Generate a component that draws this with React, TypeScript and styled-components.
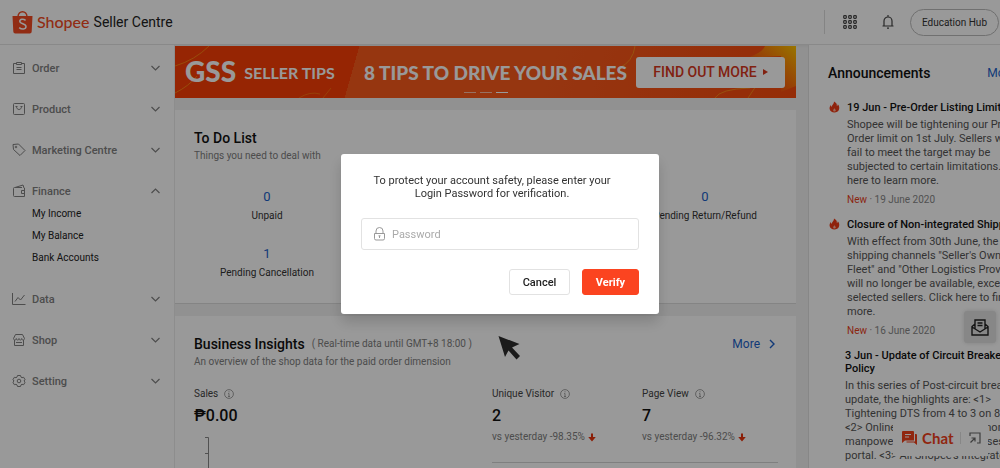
import React from 'react';
import styled, { createGlobalStyle } from 'styled-components';

const Global = createGlobalStyle`
  *, *::before, *::after { box-sizing: border-box; }
  body { margin: 0; background: #f2f2f2; font-family: Roboto, "Liberation Sans", sans-serif; color: #222; overflow: hidden; }
  h1, h2, h3, p, ul, dl, dd { margin: 0; padding: 0; }
  ul { list-style: none; }
  button, input { font: inherit; }
  button { padding: 0; border: 0; background: none; color: inherit; cursor: pointer; }
  a { color: inherit; text-decoration: none; }
  svg { display: block; flex: none; }
`;

const Page = styled.div`
  display: flex;
  flex-direction: column;
  height: 100vh;
  overflow: hidden;
`;

const Header = styled.header`
  display: flex;
  align-items: center;
  flex: none;
  height: 45px;
  padding: 0 1px 0 12px;
  background: #fff;
  border-bottom: 1px solid #e4e4e4;
  box-shadow: 0 1px 3px rgba(0, 0, 0, 0.06);
`;

const Brand = styled.a`
  display: flex;
  align-items: center;
  gap: 4px;
  flex: 1;
  font-size: 14px;
  white-space: nowrap;
`;

const BrandName = styled.span`
  font: 500 16px/24px Lato, "Liberation Sans", sans-serif;
  color: #f24a22;
`;

const Tools = styled.div`
  display: flex;
  align-items: center;
  height: 24px;
  padding-left: 18px;
  border-left: 1px solid #ddd;
`;

const IconButton = styled.button<{ $gap: number }>`
  margin-right: ${p => p.$gap}px;
  color: #444;
`;

const HubButton = styled.button`
  height: 27px;
  padding: 0 11px;
  border: 1px solid #bbb;
  border-radius: 14px;
  font-size: 10px;
  color: #333;
  white-space: nowrap;
`;

const Columns = styled.div`
  display: grid;
  grid-template-columns: 175px minmax(0, 1fr) 192px;
  flex: 1;
  min-height: 0;
`;

const Sidebar = styled.nav`
  display: flex;
  flex-direction: column;
  gap: 19px;
  padding: 12px 14px 0 12px;
  background: #fff;
  border-right: 1px solid #ececec;
`;

const GroupHead = styled.button`
  display: flex;
  align-items: center;
  gap: 6px;
  width: 100%;
  height: 22px;
  font-size: 11px;
  font-weight: 500;
  color: #808080;
  text-align: left;
  span { flex: 1; }
`;

const SubList = styled.ul`
  padding: 1px 0 0 20px;
  font-size: 10px;
  line-height: 22px;
  color: #222;
`;

const Main = styled.main`
  display: flex;
  flex-direction: column;
  gap: 12px;
  padding: 1px 12px 0 0;
`;

const Banner = styled.section`
  position: relative;
  display: flex;
  align-items: center;
  flex: none;
  height: 52px;
  padding: 0 11px 0 10px;
  overflow: hidden;
  background: linear-gradient(106deg, #fa3e06 0 29%, #fb5a1c 29% 60%, #f84a0c);
  font-family: Lato, "Liberation Sans", sans-serif;
  color: #fff;
  white-space: nowrap;
`;

const Swirls = styled.svg`
  position: absolute;
  inset: 0;
  width: 100%;
  height: 100%;
`;

const BannerLogo = styled.span`
  position: relative;
  margin-right: 8px;
  padding-bottom: 3px;
  font-size: 28px;
  font-weight: 900;
`;

const BannerTips = styled.span`
  position: relative;
  flex: 1;
  font-size: 16px;
  font-weight: 700;
`;

const BannerText = styled.span`
  position: relative;
  margin-right: 9px;
  font-size: 19px;
  font-weight: 900;
`;

const BannerButton = styled.button`
  position: relative;
  display: flex;
  align-items: center;
  justify-content: center;
  gap: 6px;
  width: 149px;
  height: 31px;
  border-radius: 3px;
  background: #fff;
  color: #d8371c;
  font: 500 14px/16px Roboto, sans-serif;
`;

const Dots = styled.div`
  position: absolute;
  bottom: 5px;
  left: 0;
  right: 0;
  display: flex;
  justify-content: center;
  gap: 4px;
`;

const Dot = styled.i<{ $on?: boolean }>`
  width: 12px;
  height: 1px;
  background: #fff;
  opacity: ${p => (p.$on ? 1 : 0.6)};
`;

const Card = styled.section<{ $height?: number }>`
  flex: ${p => (p.$height ? 'none' : '1')};
  min-height: ${p => p.$height ?? 0}px;
  padding: 19px 18px 0 19px;
  background: #fff;
  border-bottom: 1px solid #ddd;
`;

const CardHead = styled.div`
  display: flex;
  align-items: center;
  gap: 7px;
`;

const Title = styled.h2`
  font-size: 14px;
  font-weight: 500;
  line-height: 18px;
  color: #111;
`;

const Note = styled.p`
  font-size: 10px;
  line-height: 18px;
  color: #808080;
`;

const Spacer = styled.span`
  flex: 1;
`;

const MoreLink = styled.a`
  display: flex;
  align-items: center;
  gap: 8px;
  font-size: 12px;
  color: #1c5fc8;
`;

const TodoGrid = styled.dl`
  display: grid;
  grid-template-columns: repeat(4, 1fr);
  row-gap: 20px;
  padding-top: 23px;
`;

const Todo = styled.div<{ $col: number }>`
  grid-column: ${p => p.$col};
  display: flex;
  flex-direction: column-reverse;
  text-align: center;
  white-space: nowrap;
  dt { font-size: 10px; line-height: 19px; color: #333; }
  dd { font-size: 13px; line-height: 18px; color: #1c5fc8; }
`;

const Metrics = styled.div`
  display: grid;
  grid-template-columns: minmax(0, 1fr) 286px;
  padding-top: 15px;
`;

const Visits = styled.div`
  display: grid;
  grid-template-columns: 150px 1fr;
  height: 77px;
  border-bottom: 1px solid #d4d4d4;
`;

const MetricLabel = styled.h3`
  display: flex;
  align-items: center;
  gap: 6px;
  font-size: 10px;
  font-weight: 400;
  line-height: 16px;
  color: #444;
`;

const MetricValue = styled.p`
  padding-top: 3px;
  font-size: 16px;
  font-weight: 500;
  line-height: 22px;
  color: #111;
`;

const MetricDelta = styled.p`
  display: flex;
  align-items: center;
  gap: 3px;
  padding-top: 2px;
  font-size: 10px;
  line-height: 16px;
  color: #808080;
`;

const Axis = styled.svg`
  margin: 10px 0 0 11px;
`;

const News = styled.aside`
  min-width: 0;
  padding: 19px 0 0 19px;
  overflow: hidden;
  background: #fff;
  border-left: 1px solid #e2e2e2;
`;

const NewsHead = styled.div`
  display: flex;
  align-items: center;
  justify-content: space-between;
  width: 187px;
  margin-bottom: 19px;
  line-height: 18px;
`;

const Article = styled.article<{ $plain?: boolean }>`
  position: relative;
  margin-bottom: 11px;
  padding-left: ${p => (p.$plain ? 17 : 19)}px;
  white-space: pre;
  h3 { font-size: 11px; font-weight: 500; line-height: 13px; color: #111; }
`;

const Flame = styled.svg`
  position: absolute;
  top: 0;
  left: 1px;
`;

const ArticleBody = styled.p`
  padding: 4px 0 5px;
  font-size: 11px;
  line-height: 14px;
  color: #555;
`;

const Stamp = styled.p`
  font-size: 10px;
  line-height: 14px;
  color: #888;
  em { font-style: normal; color: #e8401c; }
`;

const MailButton = styled.button`
  position: fixed;
  right: 4px;
  bottom: 125px;
  display: grid;
  place-items: center;
  width: 32px;
  height: 32px;
  border-radius: 3px;
  background: #e2e2e2;
  box-shadow: 0 0 4px rgba(0, 0, 0, 0.15);
  color: #222;
`;

const ChatBar = styled.div`
  position: fixed;
  right: 12px;
  bottom: 12px;
  display: flex;
  align-items: center;
  width: 95px;
  height: 36px;
  padding: 0 7px 0 9px;
  background: #fff;
`;

const ChatButton = styled.button`
  display: flex;
  flex: 1;
  align-items: center;
  gap: 5px;
  color: #f0401a;
  font: 700 15px/20px Lato, sans-serif;
`;

const PopOut = styled.button`
  padding-left: 8px;
  border-left: 1px solid #e2e2e2;
  color: #666;
`;

const Backdrop = styled.div`
  position: fixed;
  inset: 0;
  display: flex;
  align-items: center;
  justify-content: center;
  background: rgba(0, 0, 0, 0.4);
`;

const Dialog = styled.form`
  width: 318px;
  padding: 20px 20px 19px;
  border-radius: 3px;
  background: #fff;
  box-shadow: 0 8px 14px rgba(0, 0, 0, 0.16);
`;

const Prompt = styled.p`
  padding-right: 16px;
  font-size: 11px;
  line-height: 13px;
  color: #333;
  text-align: center;
`;

const Field = styled.label`
  display: flex;
  align-items: center;
  gap: 7px;
  height: 32px;
  margin: 18px 0 19px;
  padding: 0 12px;
  border: 1px solid #e2e2e2;
  border-radius: 3px;
  color: #999;
  input { flex: 1; min-width: 0; padding: 0; border: 0; outline: 0; font-size: 11px; color: #333; background: none; }
  input::placeholder { color: #aaa; }
`;

const Actions = styled.div`
  display: flex;
  justify-content: flex-end;
  gap: 12px;
`;

const Action = styled.button<{ $primary?: boolean }>`
  width: ${p => (p.$primary ? 57 : 61)}px;
  height: 26px;
  border: 1px solid ${p => (p.$primary ? '#fb4420' : '#e2e2e2')};
  border-radius: 3px;
  background: ${p => (p.$primary ? '#fb4420' : '#fff')};
  color: ${p => (p.$primary ? '#fff' : '#222')};
  font-size: 11px;
  font-weight: ${p => (p.$primary ? 700 : 500)};
`;

const Pointer = styled.svg`
  position: fixed;
  left: 498px;
  top: 335px;
`;

const stroke = { fill: 'none', stroke: 'currentColor', strokeWidth: 1 } as const;

const navIcons: Record<string, React.ReactNode> = {
  Order: <><path d="M4 2.500H1.500v10h11v-10H10" /><path d="M4.500 1.500h5v2h-5zM4.500 6.500h5M4.500 8.500h5" /></>,
  Product: <><rect x="1.500" y="1.500" width="11" height="11" rx="1" /><path d="M4.500 4.500c0 4 5 4 5 0M3.500 4.500h2M8.500 4.500h2" /></>,
  'Marketing Centre': <><path d="M1 1.500l5.500-.5 6.500 6.500-5 5L1.500 6.500z" /><circle cx="4" cy="4" r=".8" /></>,
  Finance: <><path d="M10 3.500H2.500a1 1 0 0 0-1 1v7a1 1 0 0 0 1 1h10v-8.500M3 3.500l8-2.500 1 3M12.500 6.500h-3v3h3" /></>,
  Data: <><path d="M.5 1v11.500h13M3 9.500l3-4 2.500 2.500 4-5" /></>,
  Shop: <><path d="M3.500 1.500h7l2 4c0 2-2.600 2-2.800 0 0 2-2.700 2-2.700 0 0 2-2.700 2-2.700 0-.2 2-2.800 2-2.800 0zM2.500 7v5.500h9V7M4 9.500h6" /></>,
  Setting: <><path d="M5.500 1.500h3l.5 1.600 1 .6 1.700-.4 1.400 2.500-1.200 1.200 1.200 1.200-1.400 2.500-1.700-.4-1 .6-.5 1.600h-3L5 10.900l-1-.6-1.700.4L.9 8.200 2.100 7 .9 5.800l1.400-2.500 1.700.4 1-.6z" /><circle cx="7" cy="7" r="1.800" /></>,
};

const NavIcon = ({ name }: { name: string }) => (
  <svg width="14" height="14" viewBox="0 0 14 14" {...stroke}>{navIcons[name]}</svg>
);

const Chevron = ({ up }: { up?: boolean }) => (
  <svg width="9" height="6" viewBox="0 0 9 6" {...stroke} strokeWidth={1.2}>
    <path d={up ? 'M.5 5l4-4 4 4' : 'M.5 1l4 4 4-4'} />
  </svg>
);

const Info = () => (
  <svg width="10" height="10" viewBox="0 0 10 10" {...stroke} strokeWidth={0.8} color="#8a8a8a">
    <circle cx="5" cy="5" r="4.400" /><path d="M5 2.300v1M4.200 4.500H5v3M4 7.500h2" />
  </svg>
);

const Down = () => (
  <svg width="8" height="9" viewBox="0 0 8 9" fill="#e8350e"><path d="M3 .5h2V4h2.800L4 8.500.2 4H3z" /></svg>
);

const groups: { name: string; items?: string[] }[] = [
  { name: 'Order' },
  { name: 'Product' },
  { name: 'Marketing Centre' },
  { name: 'Finance', items: ['My Income', 'My Balance', 'Bank Accounts'] },
  { name: 'Data' },
  { name: 'Shop' },
  { name: 'Setting' },
];

const todos = [
  { label: 'Unpaid', count: 0, col: 1 },
  { label: 'Pending Return/Refund', count: 0, col: 4 },
  { label: 'Pending Cancellation', count: 1, col: 1 },
];

const visits = [
  { label: 'Unique Visitor', value: 2, delta: '-98.35%' },
  { label: 'Page View', value: 7, delta: '-96.32%' },
];

const news = [
  {
    title: '19 Jun - Pre-Order Listing Limit',
    lines: ['Shopee will be tightening our Pre-', 'Order limit on 1st July. Sellers who', 'fail to meet the target may be', 'subjected to certain limitations. Click', 'here to learn more.'],
    date: '19 June 2020',
  },
  {
    title: 'Closure of Non-integrated Shipping',
    lines: ['With effect from 30th June, the', 'shipping channels "Seller\'s Own', 'Fleet" and "Other Logistics Provider"', 'will no longer be available, except for', 'selected sellers. Click here to find', 'more.'],
    date: '16 June 2020',
  },
  {
    title: '3 Jun - Update of Circuit Breaker\nPolicy',
    lines: ['In this series of Post-circuit breaker', 'update, the highlights are: <1>', 'Tightening DTS from 4 to 3 on 8 July', '<2> Online training <3> Common', 'manpower for all the businesses', "portal. <3> All Shopee's Integrated"],
  },
];

export default function App() {
  return (
    <>
      <Global />
      <Page>
        <Header>
          <Brand href="#">
            <svg width="21" height="24" viewBox="0 0 21 24">
              <path d="M6 7c0-7 9-7 9 0" fill="none" stroke="#f24a22" strokeWidth="1.500" />
              <path d="M.5 6h20l-.8 15.500a2 2 0 0 1-2 2H3.300a2 2 0 0 1-2-2z" fill="#f24a22" />
              <path d="M13.600 10.300c-2.200-1.700-5.800-1.400-5.800 1 0 2.900 6.200 2.100 6.200 5.300 0 2.900-4.300 3.200-6.800 1" fill="none" stroke="#fff" strokeWidth="1.500" />
            </svg>
            <BrandName>Shopee</BrandName>
            <span>Seller Centre</span>
          </Brand>
          <Tools>
            <IconButton $gap={25} aria-label="Apps">
              <svg width="14" height="14" viewBox="0 0 14 14" {...stroke} strokeWidth={1.2}>
                {[0, 5, 10].map(y => [0, 5, 10].map(x => (
                  <rect key={`${x}-${y}`} x={x + 0.7} y={y + 0.7} width="2.600" height="2.600" rx=".8" />
                )))}
              </svg>
            </IconButton>
            <IconButton $gap={16} aria-label="Notifications">
              <svg width="12" height="14" viewBox="0 0 12 14" {...stroke} strokeWidth={1.2}>
                <path d="M.5 11h11M2 11V6a4 4 0 0 1 8 0v5M5 13.200h2M6 0v2" />
              </svg>
            </IconButton>
            <HubButton>Education Hub</HubButton>
          </Tools>
        </Header>

        <Columns>
          <Sidebar>
            {groups.map(g => (
              <div key={g.name}>
                <GroupHead aria-expanded={!!g.items}>
                  <NavIcon name={g.name} />
                  <span>{g.name}</span>
                  <Chevron up={!!g.items} />
                </GroupHead>
                {g.items && (
                  <SubList>
                    {g.items.map(i => <li key={i}><a href="#">{i}</a></li>)}
                  </SubList>
                )}
              </div>
            ))}
          </Sidebar>

          <Main>
            <Banner>
              <Swirls viewBox="0 0 621 52" preserveAspectRatio="none" fill="none" stroke="#ffae1c">
                <defs>
                  <linearGradient id="glow" x1="0" y1="1" x2="1" y2="0">
                    <stop offset=".3" stopColor="#ffb400" stopOpacity="0" />
                    <stop offset="1" stopColor="#ffc400" />
                  </linearGradient>
                </defs>
                <path d="M0 20Q20 14 34 0M0 47Q14 40 22 30" opacity=".6" />
                <path d="M124 52Q135 45 145 48M148 52L156 42" opacity=".4" />
                <path d="M444 22Q458 16 460 0M540 52Q545 43 575 42M573 52L581 40" opacity=".6" />
                <path d="M572 12Q588 6 590 0H621V40L606 46V10Z" fill="url(#glow)" stroke="none" />
              </Swirls>
              <BannerLogo>GSS</BannerLogo>
              <BannerTips>SELLER TIPS</BannerTips>
              <BannerText>8 TIPS TO DRIVE YOUR SALES</BannerText>
              <BannerButton>
                FIND OUT MORE
                <svg width="5" height="6" viewBox="0 0 5 6" fill="currentColor"><path d="M0 0l5 3-5 3z" /></svg>
              </BannerButton>
              <Dots><Dot /><Dot /><Dot $on /></Dots>
            </Banner>

            <Card $height={194}>
              <Title>To Do List</Title>
              <Note>Things you need to deal with</Note>
              <TodoGrid>
                {todos.map(t => (
                  <Todo key={t.label} $col={t.col}>
                    <dt>{t.label}</dt>
                    <dd>{t.count}</dd>
                  </Todo>
                ))}
              </TodoGrid>
            </Card>

            <Card>
              <CardHead>
                <Title>Business Insights</Title>
                <Note>( Real-time data until GMT+8 18:00 )</Note>
                <Spacer />
                <MoreLink href="#">
                  More
                  <svg width="10" height="10" viewBox="0 0 10 10" {...stroke} strokeWidth={1.4}><path d="M2 1l4 4-4 4" /></svg>
                </MoreLink>
              </CardHead>
              <Note>An overview of the shop data for the paid order dimension</Note>
              <Metrics>
                <div>
                  <MetricLabel>Sales <Info /></MetricLabel>
                  <MetricValue>₱0.00</MetricValue>
                  <Axis width="5" height="60" viewBox="0 0 5 60" {...stroke} color="#888"><path d="M0 .5h3.500V60M0 16.500h3.500" /></Axis>
                </div>
                <Visits>
                  {visits.map(v => (
                    <div key={v.label}>
                      <MetricLabel>{v.label} <Info /></MetricLabel>
                      <MetricValue>{v.value}</MetricValue>
                      <MetricDelta>vs yesterday {v.delta} <Down /></MetricDelta>
                    </div>
                  ))}
                </Visits>
              </Metrics>
            </Card>
          </Main>

          <News>
            <NewsHead>
              <Title>Announcements</Title>
              <MoreLink href="#">More</MoreLink>
            </NewsHead>
            {news.map(n => (
              <Article key={n.title} $plain={!n.date}>
                {n.date && (
                  <Flame width="11" height="12" viewBox="0 0 11 12">
                    <path d="M5 .5c3 1.500 3 3 2.800 4.500.8-.3 1-1 1-1.700C10.500 5 10.500 7 10 8.500 9.200 10.700 7.500 11.500 5.300 11.500S1 10.200.6 8C.4 6.300 1 5 2 4c0 1 .2 1.500.8 1.700C3 3.500 5.200 3 5 .5z" fill="#ee3a14" />
                    <path d="M5.500 7c-.3 1-1.500 1.500-1.300 3 .8.900 2.300.8 2.600-.2.200-.9-.9-1.300-1.300-2.800z" fill="#ffb29a" />
                  </Flame>
                )}
                <h3>{n.title}</h3>
                <ArticleBody>{n.lines.join('\n')}</ArticleBody>
                {n.date && <Stamp><em>New</em> · {n.date}</Stamp>}
              </Article>
            ))}
          </News>
        </Columns>
      </Page>

      <MailButton aria-label="Feedback">
        <svg width="18" height="17" viewBox="0 0 18 17" {...stroke} strokeWidth={1.4}>
          <path d="M4 5L1 7.500V16h16V7.500L14 5M1 8l8 5 8-5M4 9.500V1h10v8.500M6.500 4h5M6.500 6.500h5" />
        </svg>
      </MailButton>
      <ChatBar>
        <ChatButton>
          <svg width="15" height="14" viewBox="0 0 15 14" fill="currentColor">
            <path d="M0 1a1 1 0 0 1 1-1h10a1 1 0 0 1 1 1v8.500H3L0 12z" />
            <path d="M13 3h1a1 1 0 0 1 1 1v10l-3-2.500H4.500v-1H13z" />
            <path d="M3 3.500h6M3 6h4" stroke="#fff" />
          </svg>
          Chat
        </ChatButton>
        <PopOut aria-label="Open chat">
          <svg width="12" height="12" viewBox="0 0 12 12" {...stroke} strokeWidth={1.2}>
            <path d="M1 4V1h10v10H8M6 6L1.500 10.500M2.500 6H6v3.500" />
          </svg>
        </PopOut>
      </ChatBar>

      <Backdrop>
        <Dialog role="dialog" aria-modal="true" onSubmit={e => e.preventDefault()}>
          <Prompt>To protect your account safety, please enter your<br />Login Password for verification.</Prompt>
          <Field>
            <svg width="11" height="14" viewBox="0 0 11 14" {...stroke}>
              <path d="M.5 6.500h10v5a1.500 1.500 0 0 1-1.500 1.500H2a1.500 1.500 0 0 1-1.500-1.500zM2 6.500V4a3.500 3.500 0 0 1 7 0v2.500M5.500 9v2M4.500 8.800h2" />
            </svg>
            <input type="password" placeholder="Password" aria-label="Password" />
          </Field>
          <Actions>
            <Action type="button">Cancel</Action>
            <Action type="submit" $primary>Verify</Action>
          </Actions>
        </Dialog>
      </Backdrop>
      <Pointer width="24" height="26" viewBox="0 0 24 26">
        <path d="M.5 1l21 8-7.500 3.500 8 8.500-3.500 3.500-8-9L7 22z" fill="#1b1b1b" />
      </Pointer>
    </>
  );
}
